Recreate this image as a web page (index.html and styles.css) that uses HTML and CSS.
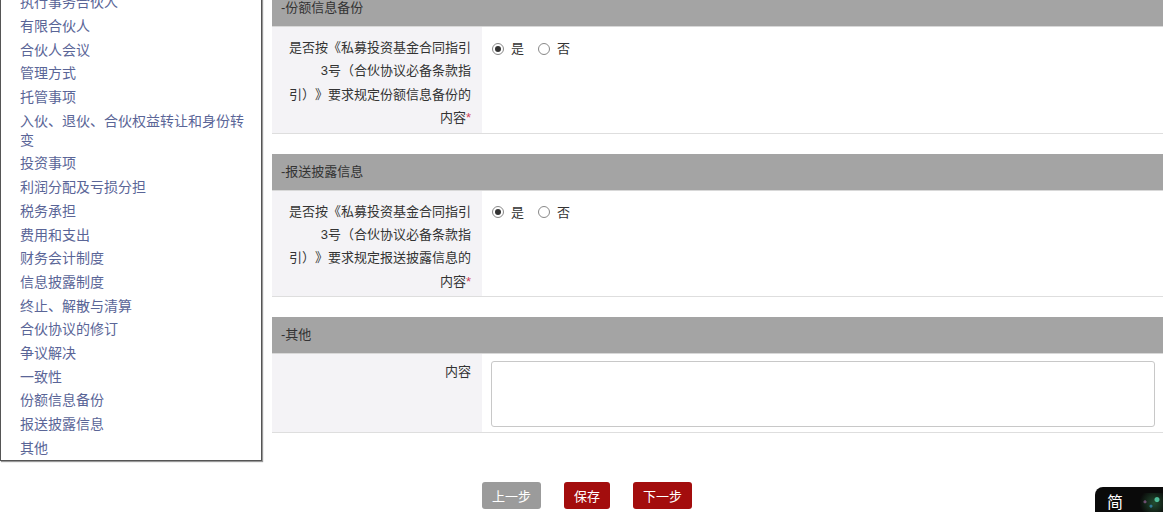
FILE: index.html
```html
<!DOCTYPE html>
<html lang="zh-CN">
<head>
    <meta charset="UTF-8">
    <title>合伙协议 - 信息填报</title>
    <link rel="stylesheet" href="styles.css">
</head>
<body>
    <div class="page">
        <!-- 左侧目录 -->
        <aside class="nav">
            <ul class="nav-list">
                <li>执行事务合伙人</li>
                <li>有限合伙人</li>
                <li>合伙人会议</li>
                <li>管理方式</li>
                <li>托管事项</li>
                <li>入伙、退伙、合伙权益转让和身份转变</li>
                <li>投资事项</li>
                <li>利润分配及亏损分担</li>
                <li>税务承担</li>
                <li>费用和支出</li>
                <li>财务会计制度</li>
                <li>信息披露制度</li>
                <li>终止、解散与清算</li>
                <li>合伙协议的修订</li>
                <li>争议解决</li>
                <li>一致性</li>
                <li>份额信息备份</li>
                <li>报送披露信息</li>
                <li>其他</li>
            </ul>
        </aside>

        <!-- 表单主体 -->
        <main class="main">
            <section class="block">
                <div class="block-title">-份额信息备份</div>
                <div class="row">
                    <div class="label">是否按《私募投资基金合同指引3号（合伙协议必备条款指引）》要求规定份额信息备份的内容<span class="req">*</span></div>
                    <div class="value">
                        <label class="radio"><span class="dot checked"></span>是</label>
                        <label class="radio"><span class="dot"></span>否</label>
                    </div>
                </div>
            </section>

            <section class="block">
                <div class="block-title">-报送披露信息</div>
                <div class="row">
                    <div class="label">是否按《私募投资基金合同指引3号（合伙协议必备条款指引）》要求规定报送披露信息的内容<span class="req">*</span></div>
                    <div class="value">
                        <label class="radio"><span class="dot checked"></span>是</label>
                        <label class="radio"><span class="dot"></span>否</label>
                    </div>
                </div>
            </section>

            <section class="block">
                <div class="block-title">-其他</div>
                <div class="row row-text">
                    <div class="label">内容</div>
                    <div class="value">
                        <textarea class="textarea"></textarea>
                    </div>
                </div>
            </section>

            <div class="actions">
                <button class="btn btn-gray">上一步</button>
                <button class="btn btn-red">保存</button>
                <button class="btn btn-red">下一步</button>
            </div>
        </main>
    </div>

    <!-- 右下角浮动小部件 -->
    <div class="widget">
        <span class="widget-text">简</span>
        <span class="widget-glow"></span>
    </div>
</body>
</html>
```

FILE: styles.css
```css
html, body {
    margin: 0;
    height: 100%;
    background: #fff;
    overflow: hidden;
}

body {
    font-family: "Liberation Sans", "Noto Sans CJK SC", sans-serif;
    color: #333;
    text-spacing-trim: space-all;
}

.page {
    display: flex;
    align-items: flex-start;
    gap: 10px;
}

/* 左侧目录 */
.nav {
    width: 260px;
    flex: none;
    margin-top: -9px;
    background: #fff;
    border: 1px solid #555;
    border-top: none;
    box-shadow: 1px 1px 1px #999;
}

.nav-list {
    list-style: none;
    margin: 0;
    padding: 0 11px 0 19px;
}

.nav-list li {
    font-size: 14px;
    line-height: 19px;
    padding: 2.35px 0;
    color: #5a6597;
}

/* 表单主体 */
.main {
    flex: 1;
    margin-top: -10px;
}

.block {
    margin-bottom: 20px;
}

.block-title {
    height: 36px;
    line-height: 36px;
    padding-left: 9px;
    font-size: 13px;
    color: #333;
    background: #a4a4a4;
    border-bottom: 1px solid #d8d8d8;
}

.row {
    display: flex;
    border-bottom: 1px solid #dedede;
}

.label {
    width: 210px;
    flex: none;
    box-sizing: border-box;
    padding: 9px 11px 3px 12px;
    background: #f4f3f6;
    text-align: right;
    font-size: 13px;
    line-height: 23.4px;
    color: #333;
}

.req {
    color: #d0435a;
}

.value {
    flex: 1;
    padding: 9px 8px 3px 9px;
    display: flex;
    align-items: flex-start;
    gap: 13px;
}

.radio {
    display: flex;
    align-items: center;
    gap: 7px;
    font-size: 13px;
    line-height: 25px;
    color: #333;
    padding-left: 1px;
}

.dot {
    width: 12px;
    height: 12px;
    box-sizing: border-box;
    border: 1px solid #888;
    border-radius: 50%;
    background: #fff;
    display: flex;
    align-items: center;
    justify-content: center;
}

.dot.checked::after {
    content: "";
    width: 6px;
    height: 6px;
    border-radius: 50%;
    background: #333;
}

.row-text .label,
.row-text .value {
    padding-top: 7px;
    padding-bottom: 5px;
    line-height: 22px;
}

.textarea {
    flex: 1;
    height: 66px;
    box-sizing: border-box;
    margin: 0;
    border: 1px solid #c8c8c8;
    border-radius: 3px;
    resize: none;
    font-family: inherit;
}

/* 按钮 */
.actions {
    display: flex;
    gap: 23px;
    padding: 29px 0 0 210px;
}

.btn {
    height: 27px;
    padding: 0 10px;
    border: none;
    border-radius: 3px;
    font-family: inherit;
    font-size: 13px;
    color: #fff;
    cursor: pointer;
}

.btn-gray {
    background: #9b9b9b;
}

.btn-red {
    background: #a30d0d;
}

/* 右下角浮动小部件 */
.widget {
    position: absolute;
    left: 1095px;
    top: 487px;
    width: 90px;
    height: 40px;
    background: #0a0a0a;
    border-radius: 8px 0 0 0;
}

.widget-text {
    position: absolute;
    left: 12px;
    top: 6px;
    font-size: 16px;
    color: #fff;
    line-height: 20px;
}

.widget-glow {
    position: absolute;
    left: 38px;
    top: 6px;
    width: 30px;
    height: 22px;
    background:
        radial-gradient(circle at 80% 30%, rgba(90, 220, 180, 0.8) 0 2px, transparent 3px),
        radial-gradient(circle at 60% 60%, rgba(60, 160, 220, 0.6) 0 1px, transparent 2px),
        radial-gradient(circle at 40% 40%, rgba(200, 120, 200, 0.5) 0 1px, transparent 2px),
        radial-gradient(circle at 70% 45%, rgba(80, 200, 120, 0.35), transparent 60%);
}
```
